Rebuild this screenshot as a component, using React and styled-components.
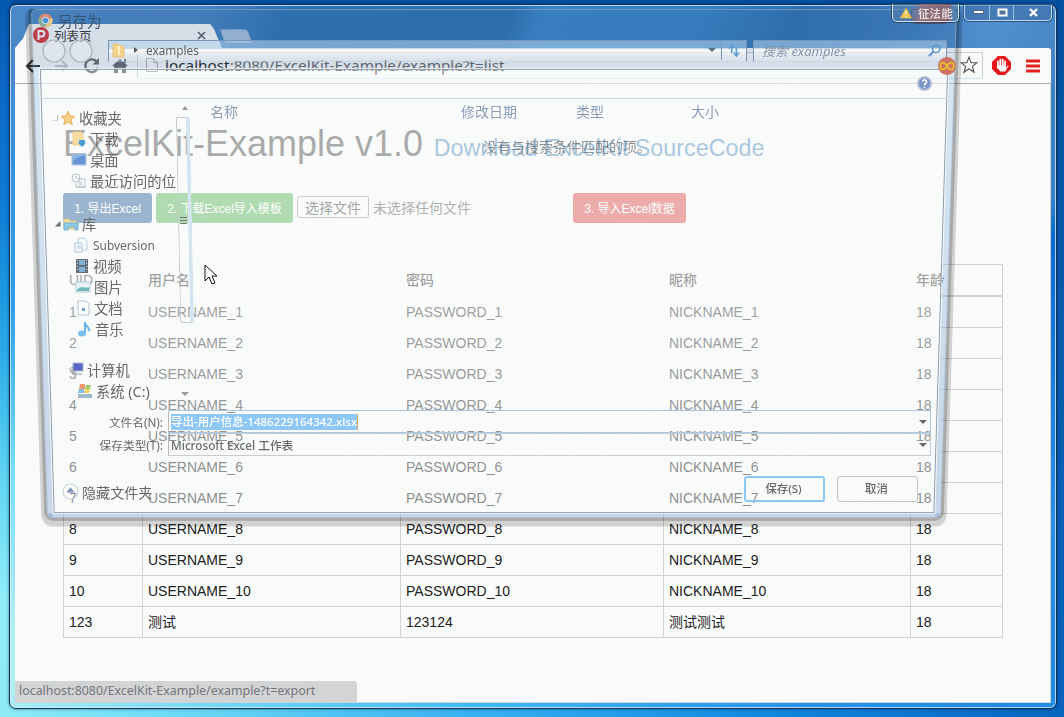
import React from "react";
import styled, { createGlobalStyle } from "styled-components";

const Global = createGlobalStyle`
  *{box-sizing:border-box}
  body{margin:0;overflow:hidden}
`;
const PAGE = "#f9fbfa";
const UI = `"Noto Sans","Noto Sans CJK SC",sans-serif`;
const WEB = `"Liberation Sans","Noto Sans CJK SC",sans-serif`;

const Desktop = styled.div`
  position:relative;width:1064px;height:717px;overflow:hidden;padding:4px 7px 8px 9px;
  background:
    linear-gradient(90deg,#8cebf6 0,#6fdcf6 160px,#4fc4f3 330px,#2ba4ee 560px,#0f82dc 800px,#0765bf 1064px) 0 100%/100% 9px no-repeat,
    linear-gradient(180deg,#0458ae 0,#0a66c4 80px,#0d7bd6 200px,#22a4e6 330px,#5fd5f3 480px,#90eef8 600px,#8cebf6 717px) 0 0/12px 100% no-repeat,
    linear-gradient(180deg,#04509f 0,#0a5cae 330px,#0763bd 717px);
`;
const Browser = styled.div`
  width:1048px;height:705px;padding:0 5px 5px;display:flex;flex-direction:column;
  border:1px solid #123456;border-radius:7px;
  box-shadow:inset 0 0 0 1px rgba(220,240,255,.75),0 0 3px rgba(0,20,60,.6);
  background:
    linear-gradient(110deg,#4b88c7 0,#4584c3 18%,#2d72b5 26%,#2c71b4 47%,#3885c9 50%,#3583c6 64%,#2d70b2 74%,#3c7dbf 85%,#528fce 92%,#4784c2 100%) 0 0/100% 80px no-repeat,
    linear-gradient(90deg,#a8edf5 0,#67d5f6 250px,#42b9f3 460px,#2592e8 800px,#238ce5 1048px) 0 100%/100% 8px no-repeat,
    linear-gradient(180deg,#4b88c7 0,#3a90da 150px,#2f9ee5 300px,#7adff4 470px,#aeeef4 620px) 0 0/8px 100% no-repeat,
    linear-gradient(180deg,#4280bd 0,#3b84c8 190px,#086ccc 230px,#2a8ae8 500px,#238ce5 705px);
`;
const TitleBar = styled.div`display:flex;height:43px;align-items:flex-end;position:relative;flex:none;`;
const Tab = styled.div`
  width:207px;height:24px;background:${PAGE};clip-path:polygon(0 100%,8px 60%,14px 0,195px 0,199px 5px,207px 100%);
  display:flex;align-items:center;padding:0 16px 2px 18px;gap:5px;font:12.5px ${UI};color:#333;
  span{flex:1}
`;
const NewTab = styled.div`width:28px;height:14px;margin:0 0 5px 0;background:#a6c1df;border:1px solid #78a2d0;border-radius:3px;transform:skewX(20deg);`;
const Controls = styled.div`
  position:absolute;right:-1px;top:0;display:flex;width:88px;height:16px;border:1px solid #bdd6ee;border-top:0;border-radius:0 0 5px 5px;background:rgba(60,110,165,.55);box-shadow:0 0 0 1px #2c5684;
`;
const Control = styled.div`flex:${p => p.$w};display:flex;align-items:center;justify-content:center;padding:0 0 1px 2px;border-left:${p => p.$first ? 0 : "1px solid #9dbfe0"};`;
const Toolbar = styled.div`height:36px;flex:none;background:${PAGE};border-bottom:1px solid #a8adb0;border-radius:0 3px 0 0;display:flex;align-items:center;padding:0 10px 0 10px;`;
const Omni = styled.div`
  flex:none;width:846px;height:27px;margin-left:9px;border:1px solid #c9cdd0;border-bottom-color:#cfe2f0;border-radius:2px;
  display:flex;align-items:center;padding:0 0 2px 8px;gap:7px;font:15.3px ${UI};color:#666;white-space:nowrap;
  b{font-weight:400;color:#222}
  svg:last-child{margin-left:auto;margin-right:4px}
`;
const Viewport = styled.div`flex:1;background:${PAGE};border-right:1px solid #cfd2d4;border-bottom:1px solid #cfd2d4;padding:36px 47px 0 48px;font:14px ${WEB};color:#222;position:relative;`;
const Heading = styled.h1`margin:0;height:48px;line-height:48px;font-size:36px;font-weight:400;color:#333;white-space:nowrap;`;
const SourceLink = styled.a`font-size:23.35px;color:#337ab7;margin-left:10.5px;`;
const Actions = styled.div`display:flex;margin-top:25px;height:30px;gap:4px;align-items:center;`;
const Action = styled.button`
  width:${p => p.$w}px;height:30px;border:0;border-radius:3px;padding:0 0 2px;background:${p => p.$bg};color:#fff;font:12px ${WEB};white-space:nowrap;margin-left:${p => p.$gap || 0}px;
`;
const FilePick = styled.div`
  width:276px;display:flex;align-items:center;gap:4px;font-size:14px;color:#444;white-space:nowrap;padding-bottom:2px;
  button{width:72px;height:22px;padding:0 0 1px;border:1px solid #888;border-radius:2px;background:${PAGE};font:14px ${WEB};color:#222}
`;
const Table = styled.div`margin-top:41px;width:940px;`;
const Row = styled.div`
  display:grid;grid-template-columns:80px 258px 263px 247px 92px;height:${p => p.$head ? 33 : 31}px;line-height:${p => p.$head ? 32 : 30}px;
  ${p => p.$head && "font-weight:500;"}
  ${p => p.$covered && `background:linear-gradient(#d0d3d3,#d0d3d3) 100% 100%/62px ${p.$head ? 2 : 1}px no-repeat,linear-gradient(#d0d3d3,#d0d3d3) 100% 0/1px 100% no-repeat${p.$head ? ",linear-gradient(#d0d3d3,#d0d3d3) 100% 0/62px 1px no-repeat" : ""};`}
`;
const Cell = styled.div`
  padding-left:5px;white-space:nowrap;
  &:first-child{padding-left:6px}
  ${p => !p.$covered && `border-right:1px solid #d0d3d3;border-bottom:1px solid #d0d3d3;&:first-child{border-left:1px solid #d0d3d3;padding-left:5px;}`}
`;
const Status = styled.div`
  position:absolute;left:0;bottom:0;width:342px;height:21px;padding-left:4px;background:#d3d4d6;border-radius:0 4px 0 0;font:12.4px/20px ${UI};color:#747679;white-space:nowrap;
`;

/* closing "save as" window, tilted backwards while it fades out */
const Tilted = styled.div`
  position:absolute;left:31px;top:9px;width:926px;height:509px;transform-origin:50% 0;
  transform:matrix3d(1,0,0,0,0,1.036,0,0.0000709,0,0,1,0,0,0,0,1);
  border:1px solid rgba(140,165,195,.65);border-radius:6px;
  background:
    linear-gradient(rgba(55,95,145,.18),rgba(55,95,145,.18)) 0 0/100% 56px no-repeat,
    linear-gradient(rgba(150,195,225,.35),rgba(120,155,205,.4)) 0 56px/5px 100% no-repeat,
    linear-gradient(rgba(150,195,225,.35),rgba(120,155,205,.4)) 100% 56px/5px 100% no-repeat,
    linear-gradient(rgba(120,155,205,.4),rgba(120,155,205,.4)) 0 100%/100% 4px no-repeat;
  box-shadow:0 0 0 3px rgba(0,0,0,.2),0 3px 0 6px rgba(0,0,0,.16);
  clip-path:inset(0 -12px -12px -12px);
  padding:57px 6px 4px 6px;
`;
const Pane = styled.div`
  height:100%;border:1px solid #8b9aaa;box-shadow:0 0 0 1px rgba(249,251,250,.8);
  background:linear-gradient(rgba(249,251,250,.25) 5px,rgba(249,251,250,.6) 9px,rgba(249,251,250,.58) 50%,rgba(249,251,250,.48));
`;
const Dialog = styled.div`position:absolute;left:40px;top:10px;width:907px;height:504px;display:flex;flex-direction:column;font:14px ${UI};color:#66686a;white-space:nowrap;`;
const Caption = styled.div`display:flex;align-items:center;height:22px;gap:5px;font-size:14.5px;color:#38536f;margin-left:-2px;padding-bottom:2px;`;
const Places = styled.div`display:flex;height:22px;margin-top:8px;align-items:center;`;
const Circles = styled.div`width:68px;display:flex;gap:3px;padding-left:2px;`;
const Crumbs = styled.div`
  width:639px;height:22px;display:flex;align-items:center;padding:0 0 2px 3px;border:1px solid #7797b8;border-bottom-color:transparent;
  background:linear-gradient(rgba(180,212,240,.55) 8px,rgba(252,253,253,.75) 8px 11px,rgba(252,253,253,.35) 14px,rgba(252,253,253,.1));font-size:11.8px;color:#5c5e60;
`;
const Arrow = styled.i`width:0;height:0;border:4px solid transparent;border-top-color:${p => p.$c || "#5a6b86"};border-bottom:0;`;
const RightArrow = styled.i`border:3px solid transparent;border-left:4px solid #555;border-right:0;margin:0 8px 0 9px;`;
const Refresh = styled.div`width:25px;height:20px;border-left:1px solid #7797b8;display:flex;align-items:center;justify-content:center;margin-left:5px;`;
const Search = styled(Crumbs)`width:194px;margin-left:6px;padding:0 5px 2px 8px;justify-content:space-between;font-style:italic;font-size:13px;color:#8495a8;`;
const HelpBar = styled.div`height:30px;margin-top:7px;border-bottom:1px solid #cbd9e6;display:flex;align-items:center;justify-content:flex-end;padding-right:15px;`;
const Body = styled.div`display:flex;height:306px;`;
const Tree = styled.div`width:136px;padding-top:8px;`;
const Node = styled.div`
  height:21px;display:flex;align-items:center;padding-left:${p => p.$x}px;margin-top:${p => p.$gap || 0}px;gap:${p => p.$latin ? 4 : 3}px;
  font-size:${p => p.$latin ? 11.9 : 14.3}px;
`;
const Caret = styled.i`width:6px;height:6px;margin-right:-1px;background:${p => p.$open ? "#666" : "transparent"};border-right:1px solid #bbb;border-bottom:1px solid #bbb;clip-path:polygon(100% 0,100% 100%,0 100%);`;
const Scroll = styled.div`width:18px;margin-top:7px;display:flex;flex-direction:column;align-items:center;height:290px;`;
const Thumb = styled.div`width:14px;height:206px;margin-top:7px;border:1px solid #c3c9cf;border-radius:2px;border-right:4px solid #d4e4f0;transform:skewX(1.2deg);background:repeating-linear-gradient(transparent 0 2px,#777 2px 3px) 50% 97px/7px 9px no-repeat;`;
const Files = styled.div`flex:1;padding-left:16px;`;
const Columns = styled.div`display:grid;grid-template-columns:251px 115px 115px 1fr;height:25px;align-items:center;color:#8b9db9;padding-bottom:1px;`;
const Empty = styled.div`padding-left:273px;height:45px;line-height:46px;color:rgba(75,80,85,.6);font-size:14px;`;
const Field = styled.div`display:flex;align-items:center;height:${p => p.$h}px;font-size:12px;`;
const Label = styled.div`width:123px;text-align:right;margin-right:5px;font-size:11.7px;`;
const Box = styled.div`width:763px;height:100%;border:1px solid ${p => p.$c};border-left-color:#bbb;display:flex;align-items:center;justify-content:space-between;padding:0 3px 0 2px;font-weight:500;font-size:11.7px;`;
const Picked = styled.span`background:#8fc8f5;color:#fff;height:16px;line-height:15px;width:187px;font-size:11.5px;border-right:1px solid #d9a765;`;
const Footer = styled.div`display:flex;align-items:center;height:26px;margin-top:20px;padding-left:22px;`;
const Hide = styled.div`display:flex;align-items:center;gap:3px;width:682px;flex:none;padding-top:5px;font-size:14.1px;`;
const Btn = styled.div`width:81px;height:26px;display:flex;align-items:center;justify-content:center;border:${p => p.$primary ? "2px solid #8bc9f4" : "1px solid #bec3c7"};border-radius:3px;font-size:11.4px;margin-right:12px;padding:0 2px 2px 0;flex:none;font-weight:500;`;
const Notice = styled.div`
  position:absolute;left:892px;top:4px;width:67px;height:18px;display:flex;align-items:center;gap:6px;padding-left:7px;border:1px solid #d4e2ef;border-top:0;border-radius:0 0 5px 5px;
  background:linear-gradient(90deg,transparent 20px,rgba(170,110,115,.7) 30px,rgba(150,90,90,.7) 56px,transparent 60px),rgba(90,130,170,.55);
  box-shadow:0 0 0 1px rgba(25,55,90,.7);font:500 11.6px ${UI};color:#eee8e4;white-space:nowrap;
`;
const CloseGlow = styled.div`position:absolute;left:911px;top:9px;width:38px;height:15px;border:1px solid rgba(85,55,70,.7);border-radius:0 0 5px 5px;background:linear-gradient(rgba(190,120,120,.2),rgba(175,85,75,.75));`;
const Extension = styled.div`position:absolute;left:938px;top:57px;display:flex;`;
const Pointer = styled.svg`position:absolute;left:204px;top:264px;`;

const Svg = ({ s = 16, children, ...r }) => <svg width={s} height={s} viewBox="0 0 16 16" fill="none" style={{ flex: "none" }} {...r}>{children}</svg>;
const art = {
  star: <path d="M8 1l2 5 5 .4-4 3.4 1.300 5L8 12l-4.300 2.800L5 9.800 1 6.400 6 6z" fill="#f8cf83" stroke="#eeb268" />,
  download: <><path d="M2 1h8l2 2v11H2z" fill="#f8dda0" stroke="#eed294" /><path d="M8 9h6v3h1l-4 4-4-4h1z" fill="#4b9cd4" /></>,
  desktop: <><rect x="1" y="2" width="14" height="11" fill="#8bb1e2" stroke="#a9bdd6" /><path d="M2 10C6 4 10 5 14 3v9H2z" fill="#6594d4" /></>,
  recent: <><circle cx="5" cy="5" r="4" stroke="#b3bfca" /><path d="M5 3v2h2M7 6h7v8H5v-4M7 9h4M7 11h5M5 14h10" stroke="#b3bfca" /></>,
  library: <><path d="M1 3h5l1 2h7v8H1z" fill="#f3dfa0" stroke="#d8c789" /><path d="M1 7h14v7h-3v-3H5v3H1z" fill="#8ccbea" stroke="#75aecb" /></>,
  svn: <><path d="M5 1h6l3 3v9H5z" fill="#f8fbfd" stroke="#b8cfe2" /><path d="M2 6h7v9H2zM4 9h4M4 11h4" stroke="#aec7dc" fill="#f8fbfd" /></>,
  video: <><rect x="2" y="1" width="12" height="14" fill="#666f78" /><path d="M5 2h6v5H5zM5 9h6v5H5z" fill="#83b3d4" /><path d="M3.500 2v12M12.500 2v12" stroke="#d5dade" strokeDasharray="1 2" /></>,
  picture: <><rect x="1" y="3" width="14" height="10" fill="#e6f2f8" stroke="#b6cedd" /><path d="M2 11c4-5 8-1 12-3v4H2z" fill="#6cb9b5" /></>,
  doc: <><path d="M3 1h8l3 3v11H3z" fill="#fafcfe" stroke="#b8c5d3" /><path d="M7 8h3v3H7z" fill="#6fa1d3" /></>,
  music: <><path d="M9 1v11M9 2c0 3 5 4 4 8" stroke="#67b5ea" strokeWidth="2" /><ellipse cx="6" cy="12.500" rx="4" ry="3" fill="#79bfed" /></>,
  computer: <><rect x="5" y="1" width="10" height="8" fill="#5964c7" stroke="#aebac7" /><path d="M7 12h7M1 7l4-2v7M2 10h3" stroke="#909caa" /></>,
  drive: <><path d="M3 1h5v5H2z" fill="#ef956f" /><path d="M9 2h5l-1 4H8z" fill="#9ccc70" /><path d="M2 6h5v4H1z" fill="#7bbced" /><path d="M8 6h5l-1 4H7z" fill="#f5cf62" /><path d="M1 11h14v4H1z" fill="#9eb9cb" /></>,
};
const tree = [
  ["star", "收藏夹", 12, 0, 1], ["download", "下载", 31], ["desktop", "桌面", 31], ["recent", "最近访问的位", 31],
  ["library", "库", 15, 22, 2], ["svn", "Subversion", 33], ["video", "视频", 34], ["picture", "图片", 35], ["doc", "文档", 35], ["music", "音乐", 36],
  ["computer", "计算机", 28, 20], ["drive", "系统 (C:)", 37],
];
const rows = [...Array(10)].map((_, i) => [i + 1, `USERNAME_${i + 1}`, `PASSWORD_${i + 1}`, `NICKNAME_${i + 1}`, 18]);
rows.push([123, "测试", "123124", "测试测试", 18]);

export default function App() {
  return (
    <Desktop>
      <Global />
      <Browser>
        <TitleBar>
          <Tab>
            <Svg s={16}><circle cx="8" cy="8" r="8" fill="#d9363e" /><path d="M5.500 13V4h3.200a2.700 2.700 0 010 5.400H5.500" stroke="#fff" strokeWidth="2" /></Svg>
            <span>列表页</span>
            <Svg s={9} viewBox="0 0 9 9"><path d="M1 1l7 7M8 1L1 8" stroke="#555b65" strokeWidth="1.600" /></Svg>
          </Tab>
          <NewTab />
          <Controls>
            <Control $w={25} $first><svg width="11" height="5"><rect x=".5" y=".5" width="10" height="3" fill="#fff" stroke="#53677c" /></svg></Control>
            <Control $w={23}><svg width="11" height="9"><rect x="1.500" y="1.500" width="8" height="6" fill="#50718f" stroke="#fff" strokeWidth="2" /></svg></Control>
            <Control $w={40}><svg width="11" height="9"><path d="M2 1l7 7M9 1L2 8" stroke="#fff" strokeWidth="2.400" /></svg></Control>
          </Controls>
        </TitleBar>
        <Toolbar>
          <Svg s={16}><path d="M15 8H2M8 2L2 8l6 6" stroke="#333639" strokeWidth="2.200" /></Svg>
          <Svg s={16} style={{ marginLeft: 13 }}><path d="M1 8h12M8 3l5 5-5 5" stroke="#c6cacf" strokeWidth="2" /></Svg>
          <Svg s={17} style={{ marginLeft: 13 }}><path d="M13 4.500A6 6 0 1014 10" stroke="#66696d" strokeWidth="2.200" /><path d="M15 1v6H9z" fill="#66696d" /></Svg>
          <Svg s={16} style={{ marginLeft: 12 }}><path d="M8 1l8 7h-2v7h-4v-5H6v5H2V8H0zM12 1h2v4h-2z" fill="#66696d" /></Svg>
          <Omni>
            <svg width="12" height="14"><path d="M.5.5h7l4 4v9H.500zM7.500.500v4h4" fill="none" stroke="#aaa" /></svg>
            <span><b>localhost</b>:8080/ExcelKit-Example/example?t=list</span>
            <Svg s={18}><path d="M8 1l1.900 5H15l-4 3.200 1.500 5.300L8 11.300l-4.500 3.200L5 9.200 1 6h5.100z" stroke="#555" strokeWidth="1" /></Svg>
          </Omni>
          <Svg s={19} style={{ marginLeft: 9 }}><path d="M5 0h6l5 5v6l-5 5H5l-5-5V5z" fill="#e5191c" /><path d="M5 10V4.500M7 9V3M9 9V3M11 9V4.500" stroke="#fff" strokeWidth="1.500" strokeLinecap="round" /><path d="M4.500 8h7.300v2.500L13 8l1 .5L11 13H7l-3-3.500z" fill="#fff" /></Svg>
          <svg width="14" height="14" style={{ marginLeft: 15 }}><path d="M0 2h14M0 7h14M0 12h14" stroke="#e42222" strokeWidth="3" /></svg>
        </Toolbar>
        <Viewport>
          <Heading>ExcelKit-Example v1.0<SourceLink>Download ExcelKit SourceCode</SourceLink></Heading>
          <Actions>
            <Action $w={89} $bg="#125091">1. 导出Excel</Action>
            <Action $w={137} $bg="#49ad49">2. 下载Excel导入模板</Action>
            <FilePick><button>选择文件</button>未选择任何文件</FilePick>
            <Action $w={113} $bg="#d83a3a" $gap={-4}>3. 导入Excel数据</Action>
          </Actions>
          <Table>
            <Row $head $covered>{["UID", "用户名", "密码", "昵称", "年龄"].map(t => <Cell $covered key={t}>{t}</Cell>)}</Row>
            {rows.map((r, i) => <Row key={i} $covered={i < 7}>{r.map((t, j) => <Cell key={j} $covered={i < 7}>{t}</Cell>)}</Row>)}
          </Table>
          <Status>localhost:8080/ExcelKit-Example/example?t=export</Status>
        </Viewport>
      </Browser>
      <Tilted><Pane /></Tilted>
      <Dialog>
        <Caption>
          <Svg s={15}><circle cx="8" cy="8" r="7.500" fill="#d58b72" /><path d="M1 5a7.500 7.500 0 006 10.400L10 9z" fill="#81af8f" /><path d="M15 5a7.500 7.500 0 01-7 10.500L10 7z" fill="#dfc58a" /><circle cx="8" cy="8" r="3.500" fill="#4d90d5" stroke="#d9e4ef" /></Svg>
          另存为
        </Caption>
        <Places>
          <Circles>
            {[0, 1].map(i => <svg key={i} width="24" height="24"><circle cx="12" cy="12" r="11" fill="rgba(235,240,245,.4)" stroke="#adb5bd" strokeWidth="1.200" /></svg>)}
          </Circles>
          <Crumbs>
            <svg width="13" height="15"><path d="M1 1h5l1 2h5v11H1z" fill="#f3d58d" stroke="#e0c27e" /><path d="M7 3v9" stroke="#fff0c6" strokeWidth="2" /></svg>
            <RightArrow />examples
            <Arrow style={{ marginLeft: "auto" }} />
            <Refresh><Svg s={15}><path d="M5 11V3M2 6l3-4 2 3M10 5v8M7 10l3 4 3-4" stroke="#5d9cd3" strokeWidth="1.700" /></Svg></Refresh>
          </Crumbs>
          <Search>搜索 examples<Svg s={13}><circle cx="10" cy="6" r="4.500" stroke="#5b97ce" strokeWidth="2" /><path d="M7 9l-6 6" stroke="#5b97ce" strokeWidth="2.500" /></Svg></Search>
        </Places>
        <HelpBar><Svg s={15}><circle cx="8" cy="8" r="7" fill="#7c93cb" stroke="#b3bfd5" strokeWidth="2" /><path d="M5.800 6a2.200 2.200 0 114 1.500C9 8 8 8.500 8 10M8 11.500v1.500" stroke="#fff" strokeWidth="1.700" /></Svg></HelpBar>
        <Body>
          <Tree>
            {tree.map(([icon, label, x, gap, caret]) => (
              <Node key={label} $x={x} $gap={gap} $latin={icon === "svn"}>{caret && <Caret $open={caret === 2} />}<Svg>{art[icon]}</Svg>{label}</Node>
            ))}
          </Tree>
          <Scroll><svg width="6" height="4" style={{ flex: "none" }}><path d="M0 4l3-4 3 4z" fill="#999" /></svg><Thumb /><Arrow $c="#999" style={{ marginTop: "auto" }} /></Scroll>
          <Files><Columns><span>名称</span><span>修改日期</span><span>类型</span><span>大小</span></Columns><Empty>没有与搜索条件匹配的项。</Empty></Files>
        </Body>
        <Field $h={23} style={{ marginTop: 5 }}><Label>文件名(N):</Label><Box $c="#a6c8e2"><Picked>导出-用户信息-1486229164342.xlsx</Picked><Arrow $c="#666" /></Box></Field>
        <Field $h={23}><Label>保存类型(T):</Label><Box $c="#c8ccd0">Microsoft Excel 工作表<Arrow $c="#666" /></Box></Field>
        <Footer>
          <Hide><Svg s={17}><circle cx="8" cy="8" r="7" stroke="#c6ccdb" /><path d="M4 9l4-5 4 5z" fill="#8494bb" /></Svg>隐藏文件夹</Hide>
          <Btn $primary>保存(S)</Btn><Btn>取消</Btn>
        </Footer>
      </Dialog>
      <Extension><Svg s={18}><circle cx="8" cy="8" r="8" fill="#cf7064" /><path d="M8 8C5 3 2 5 2 8s3 5 6 0 6-3 6 0-3 5-6 0z" stroke="#e4c02e" strokeWidth="1.500" /></Svg></Extension>
      <CloseGlow />
      <Notice><Svg s={12}><path d="M8 1l8 14H0z" fill="#f2c34a" /><path d="M8 5v5M8 12v2" stroke="#fff" strokeWidth="1.500" /></Svg>征法能</Notice>
      <Pointer width="13" height="21"><path d="M1 1v16l4-4 3 7 3-1-3-7h5z" fill="#fff" stroke="#111" /></Pointer>
    </Desktop>
  );
}
